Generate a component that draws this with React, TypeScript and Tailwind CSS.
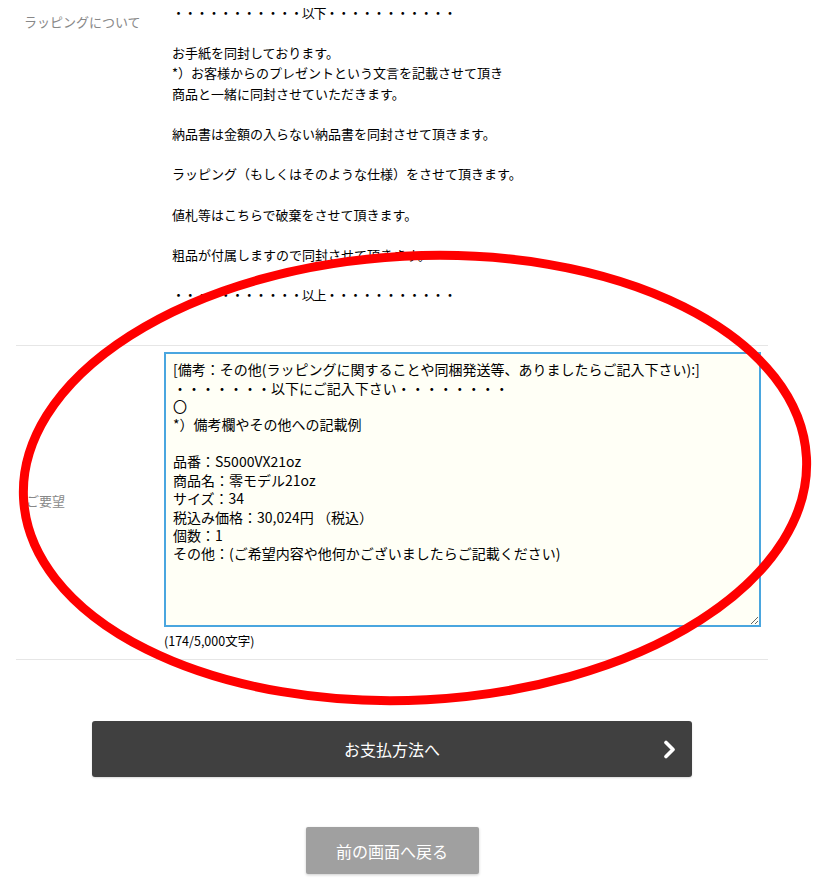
import React from 'react';

const wrappingLines = [
  '・・・・・・・・・・・以下・・・・・・・・・・・',
  '',
  'お手紙を同封しております。',
  '*）お客様からのプレゼントという文言を記載させて頂き',
  '商品と一緒に同封させていただきます。',
  '',
  '納品書は金額の入らない納品書を同封させて頂きます。',
  '',
  'ラッピング（もしくはそのような仕様）をさせて頂きます。',
  '',
  '値札等はこちらで破棄をさせて頂きます。',
  '',
  '粗品が付属しますので同封させて頂きます。',
  '',
  '・・・・・・・・・・・以上・・・・・・・・・・・',
];

const requestText = `[備考：その他(ラッピングに関することや同梱発送等、ありましたらご記入下さい):]
・・・・・・・以下にご記入下さい・・・・・・・・
〇
*）備考欄やその他への記載例

品番：S5000VX21oz
商品名：零モデル21oz
サイズ：34
税込み価格：30,024円 （税込）
個数：1
その他：(ご希望内容や他何かございましたらご記載ください)`;

const App: React.FC = () => {
  return (
    <div className="relative w-[815px] h-[884px] overflow-hidden bg-white font-['Noto_Sans_CJK_JP','Noto_Sans',sans-serif] text-black">
      <div className="ml-4 w-[752px]">
        {/* ラッピング */}
        <div className="flex border-b border-[#e6e6e6] pb-[40px]">
          <div className="w-[148px] shrink-0 pl-2 pt-[12px] text-[13px] leading-[20px] text-[#888]">ラッピングについて</div>
          <div className="pl-2 pt-[3px] text-[13px] leading-[20.15px]">
            {wrappingLines.map((line, i) =>
              line === '' ? (
                <div key={i} className="h-[20.15px]" />
              ) : (
                <div key={i} className={line.startsWith('・') ? 'tracking-[-1.2px]' : ''}>{line}</div>
              )
            )}
          </div>
        </div>

        {/* ご要望 */}
        <div className="flex items-center border-b border-[#e6e6e6] pt-[6px] pb-[10px]">
          <div className="w-[148px] shrink-0 pl-[10px] text-[13px] text-[#888]">ご要望</div>
          <div className="flex flex-col">
            <textarea
              readOnly
              defaultValue={requestText}
              className="w-[597px] h-[275px] border-2 border-[#4aa6df] bg-[#fffff6] px-[7px] py-[6px] text-[14px] leading-[18.4px] text-black outline-none font-['Noto_Sans_CJK_JP',sans-serif]"
            />
            <div className="mt-[6px] text-[12.5px] leading-[16px] text-black">(174/5,000文字)</div>
          </div>
        </div>

        {/* buttons */}
        <button className="relative mx-auto mt-[61px] flex h-[56px] w-[600px] items-center justify-center rounded-[3px] bg-[#404040] text-[16px] text-white shadow-[0_1px_2px_rgba(0,0,0,0.15)]">
          お支払方法へ
          <svg className="absolute right-[16px] top-[19px]" width="13" height="19" viewBox="0 0 13 19">
            <polyline points="3,2.5 10,9.5 3,16.5" fill="none" stroke="#fff" strokeWidth="3.6" strokeLinecap="round" strokeLinejoin="round" />
          </svg>
        </button>

        <button className="mx-auto mt-[50px] flex h-[47px] w-[173px] items-center justify-center rounded-[2px] bg-[#a0a0a0] text-[16px] text-white shadow-[0_1px_3px_rgba(0,0,0,0.2)]">
          前の画面へ戻る
        </button>
      </div>

      {/* red annotation */}
      <svg className="pointer-events-none absolute inset-0" width="815" height="884" viewBox="0 0 815 884">
        <ellipse cx="415" cy="478" rx="392" ry="222" transform="rotate(-3 415 478)" fill="none" stroke="#ff0000" strokeWidth="9" />
      </svg>
    </div>
  );
};

export default App;
